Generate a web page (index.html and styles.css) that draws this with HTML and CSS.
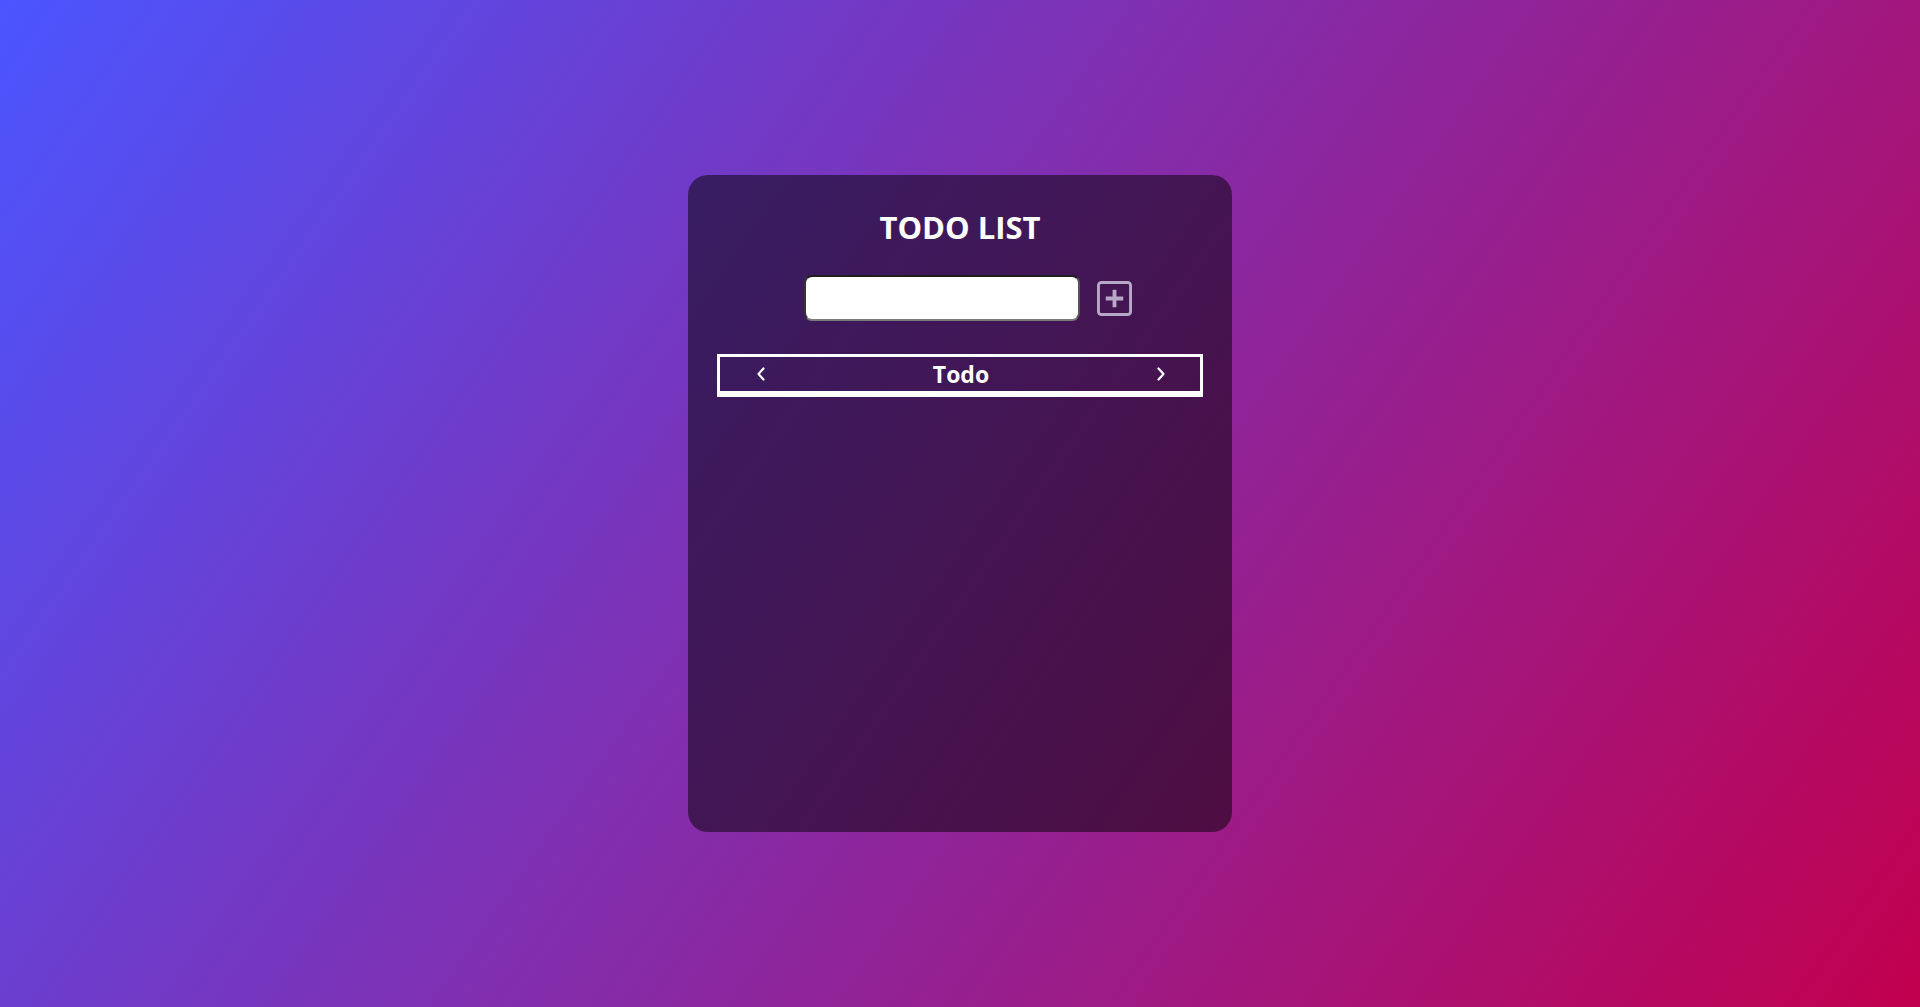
FILE: index.html
```html
<!DOCTYPE html>
<html lang="en">
<head>
  <meta charset="UTF-8" />
  <meta name="viewport" content="width=device-width, initial-scale=1.0"/>
  <title>Todo List</title>
  <link rel="stylesheet" href="styles.css">
</head>
<body>

  <div class="todo-card">
    <h1 class="title">TODO LIST</h1>

    <form class="add-row" onsubmit="return false">
      <input class="todo-input" type="text">
      <button class="add-btn" type="submit" aria-label="Add">
        <svg viewBox="0 0 36 36" width="35" height="35">
          <rect x="1.5" y="1.5" width="33" height="33" rx="3" fill="none" stroke="currentColor" stroke-width="3"/>
          <path d="M18 9v18M9 18h18" stroke="currentColor" stroke-width="4"/>
        </svg>
      </button>
    </form>

    <div class="tabs">
      <button class="tab-arrow" aria-label="Previous">
        <svg viewBox="0 0 10 14" width="10" height="14">
          <path d="M7.5 1.5L2.5 7l5 5.5" fill="none" stroke="currentColor" stroke-width="2.2" stroke-linecap="round" stroke-linejoin="round"/>
        </svg>
      </button>
      <span class="tab-name">Todo</span>
      <button class="tab-arrow" aria-label="Next">
        <svg viewBox="0 0 10 14" width="10" height="14">
          <path d="M2.5 1.5L7.5 7l-5 5.5" fill="none" stroke="currentColor" stroke-width="2.2" stroke-linecap="round" stroke-linejoin="round"/>
        </svg>
      </button>
    </div>

    <ul class="todo-list"></ul>
  </div>

</body>
</html>
```

FILE: styles.css
```css
/* ---------------- GENERAL ---------------- */
body, html {
  margin: 0;
  height: 100%;
}

body {
  font-family: 'Open Sans', 'Noto Sans', sans-serif;
  background: linear-gradient(125deg, #4b55ff, #c2004e);
  color: white;
  display: flex;
  align-items: center;
  justify-content: center;
}

/* ---------------- CARD ---------------- */
.todo-card {
  width: 544px;
  height: 657px;
  box-sizing: border-box;
  padding: 30px 29px;
  border-radius: 20px;
  background: rgba(0, 0, 0, 0.5);
}

.title {
  margin: 0;
  font-size: 31px;
  font-weight: 700;
  text-align: center;
  line-height: 44px;
}

/* ---------------- INPUT ROW ---------------- */
.add-row {
  display: flex;
  justify-content: center;
  align-items: center;
  gap: 17px;
  margin-top: 26px;
  padding-left: 16px;
}

.todo-input {
  width: 276px;
  height: 46px;
  box-sizing: border-box;
  border: 2px solid;
  border-color: #1e1e1e #555 #7a7a7a #333;
  border-radius: 8px;
  background: white;
  padding: 0 10px;
  font-size: 16px;
  outline: none;
}

.add-btn {
  background: none;
  border: none;
  padding: 0;
  color: #b6a8c6;
  display: flex;
  cursor: pointer;
}

/* ---------------- TABS ---------------- */
.tabs {
  display: flex;
  align-items: center;
  justify-content: space-between;
  margin-top: 33px;
  height: 43px;
  box-sizing: border-box;
  border: 3px solid white;
  border-bottom-width: 6px;
  padding: 0 34px 0 36px;
}

.tab-arrow {
  background: none;
  border: none;
  padding: 0;
  color: white;
  display: flex;
  cursor: pointer;
}

.tab-name {
  font-size: 23px;
  font-weight: 700;
}

.todo-list {
  list-style: none;
  margin: 0;
  padding: 0;
}
```
